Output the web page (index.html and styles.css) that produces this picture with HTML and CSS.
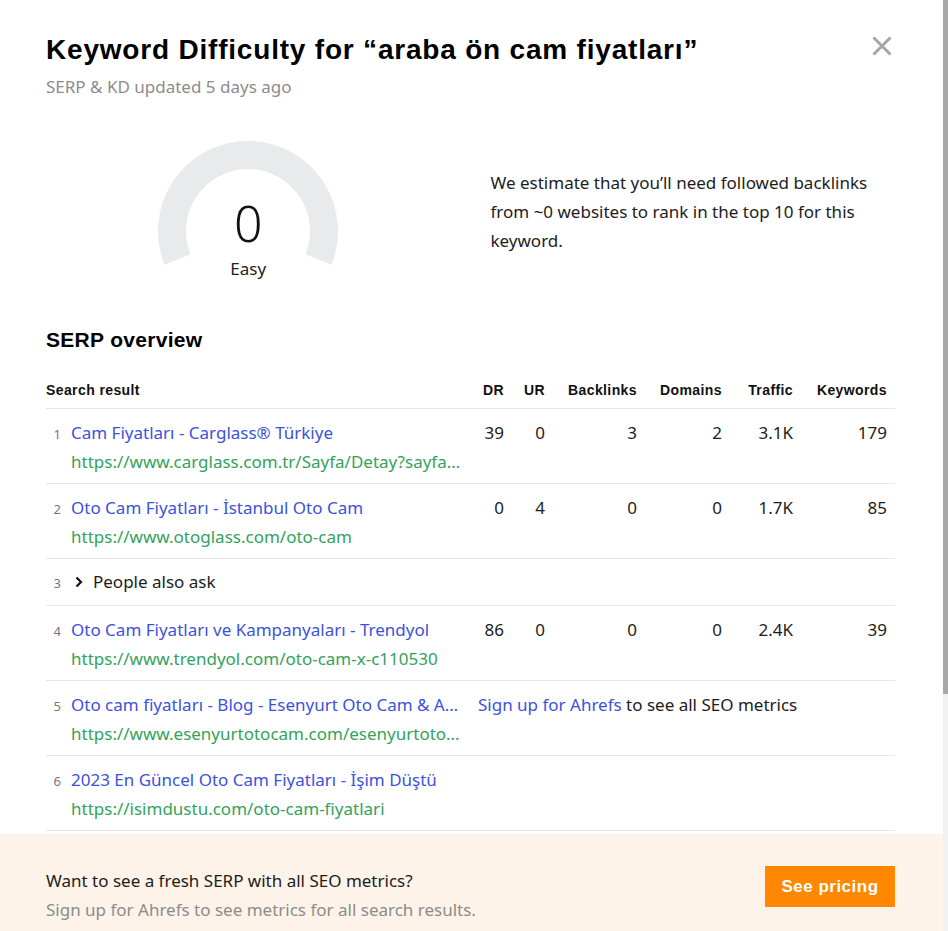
FILE: index.html
```html
<!DOCTYPE html>
<html lang="en">
<head>
  <meta charset="UTF-8">
  <meta name="viewport" content="width=device-width, initial-scale=1.0">
  <title>Keyword Difficulty</title>

  <link rel="stylesheet" href="styles.css">
</head>
<body>
  <div class="page">
    <div class="modal">
      <div class="modal-head">
        <div>
          <h1 class="modal-title">Keyword Difficulty for “araba ön cam fiyatları”</h1>
          <p class="updated">SERP &amp; KD updated 5 days ago</p>
        </div>
        <button class="closeBtn" type="button" aria-label="Close">
          <svg width="20" height="20" viewBox="0 0 20 20">
            <path d="M1.5 1.5 L18.5 18.5 M18.5 1.5 L1.5 18.5" stroke="#a6a6a6" stroke-width="3" fill="none"/>
          </svg>
        </button>
      </div>

      <!-- KD gauge -->
      <div class="kd">
        <div class="gauge-col">
          <div class="gauge">
            <svg width="180" height="130" viewBox="0 0 180 130">
              <path d="M19.53 118.47 A76 76 0 1 1 160.47 118.47" stroke="#e9eaec" stroke-width="28" fill="none"/>
            </svg>
            <div class="gauge-value">0</div>
            <div class="gauge-label">Easy</div>
          </div>
        </div>
        <p class="kd-text">We estimate that you’ll need followed backlinks from ~0 websites to rank in the top 10 for this keyword.</p>
      </div>

      <!-- SERP overview -->
      <h2 class="serp-title">SERP overview</h2>
      <table class="serpTable">
        <colgroup>
          <col style="width: 424px">
          <col style="width: 42px">
          <col style="width: 41px">
          <col style="width: 92px">
          <col style="width: 85px">
          <col style="width: 71px">
          <col style="width: 94px">
        </colgroup>
        <thead>
          <tr>
            <th class="th-left">Search result</th>
            <th>DR</th>
            <th>UR</th>
            <th>Backlinks</th>
            <th>Domains</th>
            <th>Traffic</th>
            <th>Keywords</th>
          </tr>
        </thead>
        <tbody>
          <tr>
            <td class="result">
              <div class="result-line"><span class="pos">1</span><a class="result-title" href="#">Cam Fiyatları - Carglass® Türkiye</a></div>
              <div class="result-url">https://www.carglass.com.tr/Sayfa/Detay?sayfa=oto-cam-fiyatlari</div>
            </td>
            <td>39</td><td>0</td><td>3</td><td>2</td><td>3.1K</td><td>179</td>
          </tr>
          <tr>
            <td class="result">
              <div class="result-line"><span class="pos">2</span><a class="result-title" href="#">Oto Cam Fiyatları - İstanbul Oto Cam</a></div>
              <div class="result-url">https://www.otoglass.com/oto-cam</div>
            </td>
            <td>0</td><td>4</td><td>0</td><td>0</td><td>1.7K</td><td>85</td>
          </tr>
          <tr class="paa">
            <td class="result" colspan="7">
              <div class="result-line">
                <span class="pos">3</span>
                <svg class="chevron" width="8" height="12" viewBox="0 0 8 12">
                  <path d="M1.5 1.5 L6 6 L1.5 10.5" stroke="#111" stroke-width="2.2" fill="none"/>
                </svg>
                <span class="paa-text">People also ask</span>
              </div>
            </td>
          </tr>
          <tr>
            <td class="result">
              <div class="result-line"><span class="pos">4</span><a class="result-title" href="#">Oto Cam Fiyatları ve Kampanyaları - Trendyol</a></div>
              <div class="result-url">https://www.trendyol.com/oto-cam-x-c110530</div>
            </td>
            <td>86</td><td>0</td><td>0</td><td>0</td><td>2.4K</td><td>39</td>
          </tr>
          <tr>
            <td class="result">
              <div class="result-line"><span class="pos">5</span><a class="result-title" href="#">Oto cam fiyatları - Blog - Esenyurt Oto Cam &amp; Ayna</a></div>
              <div class="result-url">https://www.esenyurtotocam.com/esenyurtotocam-blog/oto-cam-fiyatlari</div>
            </td>
            <td class="signup" colspan="6"><a href="#">Sign up for Ahrefs</a> to see all SEO metrics</td>
          </tr>
          <tr>
            <td class="result">
              <div class="result-line"><span class="pos">6</span><a class="result-title" href="#">2023 En Güncel Oto Cam Fiyatları - İşim Düştü</a></div>
              <div class="result-url">https://isimdustu.com/oto-cam-fiyatlari</div>
            </td>
            <td colspan="6"></td>
          </tr>
        </tbody>
      </table>
    </div>

    <div class="cta">
      <div>
        <p class="cta-title">Want to see a fresh SERP with all SEO metrics?</p>
        <p class="cta-sub">Sign up for Ahrefs to see metrics for all search results.</p>
      </div>
      <a class="pricingBtn" href="#">See pricing</a>
    </div>
  </div>

  <div class="scrollbar"><div class="scrollbar-thumb"></div></div>
</body>
</html>
```

FILE: styles.css
```css
html, body {
  margin: 0;
  height: 100%;
  overflow: hidden;
}
body {
  display: flex;
  font-family: "Noto Sans", sans-serif;
  font-size: 17px;
  color: #1c1c1c;
  background-color: #fff;
}
p {
  margin: 0;
}
a {
  text-decoration: none;
}

.page {
  flex: 1;
  display: flex;
  flex-direction: column;
  min-width: 0;
}
.modal {
  padding: 32px 48px 0 46px;
}

/* header */
.modal-head {
  display: flex;
  justify-content: space-between;
  align-items: flex-start;
}
.modal-title {
  margin: 0;
  font-family: "Liberation Sans", sans-serif;
  font-size: 28px;
  line-height: 36px;
  font-weight: 700;
  letter-spacing: 0.8px;
  color: #000;
}
.updated {
  margin-top: 7px;
  line-height: 24px;
  color: #8c8c8c;
}
.closeBtn {
  margin: 4px 3px 0 0;
  padding: 0;
  border: none;
  background: transparent;
  cursor: pointer;
  line-height: 0;
}

/* difficulty gauge */
.kd {
  display: grid;
  grid-template-columns: 1fr 1fr;
  column-gap: 40px;
  align-items: center;
  margin-top: 42px;
}
.gauge-col {
  display: flex;
  justify-content: center;
}
.gauge {
  position: relative;
  width: 180px;
  height: 140px;
}
.gauge svg {
  display: block;
}
.gauge-value {
  position: absolute;
  left: 0;
  right: 0;
  top: 52px;
  text-align: center;
  font-size: 50px;
  line-height: 60px;
  font-weight: 300;
  color: #111;
}
.gauge-label {
  position: absolute;
  left: 0;
  right: 0;
  top: 116px;
  text-align: center;
  line-height: 24px;
  color: #222;
}
.kd-text {
  line-height: 29px;
  color: #1c1c1c;
}

/* SERP table */
.serp-title {
  margin: 45px 0 0;
  font-family: "Liberation Sans", sans-serif;
  font-size: 21px;
  line-height: 28px;
  font-weight: 700;
  letter-spacing: 0.3px;
  color: #000;
}
.serpTable {
  width: 100%;
  table-layout: fixed;
  border-collapse: collapse;
  margin-top: 27px;
  margin-bottom: 3px;
}
.serpTable th {
  font-family: "Liberation Sans", sans-serif;
  font-size: 14px;
  font-weight: 700;
  line-height: 18px;
  letter-spacing: 0.4px;
  color: #111;
  text-align: right;
  padding: 0 8px 9px 0;
  border-bottom: 1px solid #e6e6e6;
  white-space: nowrap;
}
.serpTable th.th-left {
  text-align: left;
}
.serpTable td {
  vertical-align: top;
  text-align: right;
  padding: 9px 8px 7px 0;
  line-height: 29px;
  border-bottom: 1px solid #e6e6e6;
  color: #1c1c1c;
}
.serpTable td.result {
  text-align: left;
}
.result-line {
  display: flex;
  align-items: baseline;
  white-space: nowrap;
  overflow: hidden;
}
.pos {
  flex: none;
  width: 15px;
  margin-right: 10px;
  text-align: right;
  font-size: 13px;
  line-height: 20px;
  color: #777;
}
.result-title {
  color: #3b52de;
  overflow: hidden;
  text-overflow: ellipsis;
}
.result-url {
  margin-left: 25px;
  color: #34a25c;
  white-space: nowrap;
  overflow: hidden;
  text-overflow: ellipsis;
}
.serpTable .paa td {
  padding-top: 8px;
  padding-bottom: 9px;
}
.chevron {
  flex: none;
  margin: 0 10px 0 4px;
  align-self: center;
}
.paa-text {
  color: #1c1c1c;
}
.serpTable td.signup {
  text-align: left;
  padding-left: 8px;
}
.signup a {
  color: #3b52de;
}

/* bottom call to action */
.cta {
  display: flex;
  justify-content: space-between;
  align-items: flex-start;
  padding: 32px 48px 32px 46px;
  background-color: #fdf3e8;
}
.cta-title {
  line-height: 29px;
  color: #1c1c1c;
}
.cta-sub {
  line-height: 29px;
  color: #8c8c8c;
}
.pricingBtn {
  width: 130px;
  height: 41px;
  line-height: 41px;
  text-align: center;
  background-color: #ff8800;
  color: #fff;
  font-family: "Liberation Sans", sans-serif;
  font-size: 17px;
  font-weight: 700;
  letter-spacing: 0.5px;
}

/* page scrollbar */
.scrollbar {
  flex: none;
  width: 5px;
  background-color: #f1f1f1;
}
.scrollbar-thumb {
  height: 694px;
  background-color: #a8a8a8;
}
```
